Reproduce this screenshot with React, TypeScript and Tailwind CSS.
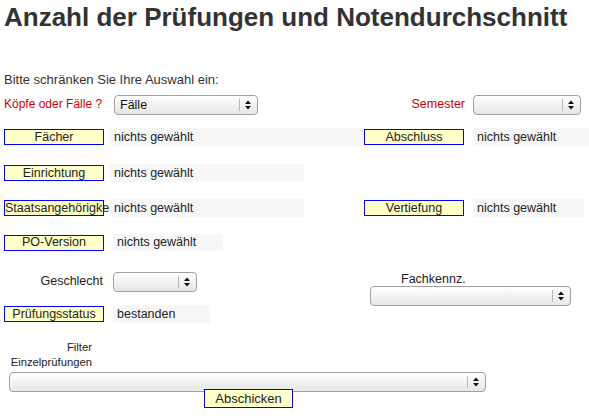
import React from "react";

function Btn({ label, overflow }: { label: string; overflow?: boolean }) {
  return (
    <div
      className={
        "flex h-[16px] w-[100px] shrink-0 items-center whitespace-nowrap border border-[#0000ff] bg-[#ffffc8] text-[12.5px] leading-none text-[#222] " +
        (overflow ? "justify-start" : "justify-center")
      }
    >
      {label}
    </div>
  );
}

function Box({ text, w, h = 18 }: { text: string; w: number; h?: number }) {
  return (
    <div
      className="relative z-10 flex shrink-0 items-center bg-[#f7f7f7] pl-[4px] text-[12.5px] text-[#222]"
      style={{ width: w, height: h }}
    >
      {text}
    </div>
  );
}

function Select({ w, value }: { w: number; value?: string }) {
  return (
    <div
      className="flex h-[20px] shrink-0 items-center rounded-[4px] border border-[#a0a0a0] bg-gradient-to-b from-white to-[#e6e6e6] text-[12.5px] text-[#111]"
      style={{ width: w }}
    >
      <span className="flex-1 pl-[5px]">{value}</span>
      <span className="h-[12px] w-px bg-[#b8b8b8]" />
      <svg width="16" height="12" viewBox="0 0 16 12" className="mr-[1px]">
        <path d="M5 5 L8 1.5 L11 5 Z" fill="#111" />
        <path d="M5 7 L8 10.5 L11 7 Z" fill="#111" />
      </svg>
    </div>
  );
}

export default function App() {
  return (
    <div className="h-[416px] w-[589px] overflow-hidden bg-white font-['Liberation_Sans',Arial,sans-serif] text-[#333]">
      <h1 className="pl-[4px] pt-[2px] text-[26px] font-bold leading-[30px] text-[#333]">
        Anzahl der Prüfungen und Notendurchschnitt
      </h1>

      <p className="mt-[41px] pl-[4px] text-[13px] leading-[14px]">
        Bitte schränken Sie Ihre Auswahl ein:
      </p>

      <div className="mt-[8px] flex h-[21px]">
        <div className="w-[110px] whitespace-nowrap pl-[4px] pt-[2px] text-[12px] leading-[14px] text-[#cc0000]">
          Köpfe oder Fälle ?
        </div>
        <div className="pl-[4px]">
          <Select w={144} value="Fälle" />
        </div>
        <div className="w-[215px] pr-[8px] pt-[2px] text-right text-[12.5px] leading-[14px] text-[#cc0000]">
          Semester
        </div>
        <Select w={108} />
      </div>

      <div className="mt-[12px] flex items-center">
        <div className="w-[110px] pl-[4px]">
          <Btn label="Fächer" />
        </div>
        <Box text="nichts gewählt" w={254} />
        <Btn label="Abschluss" />
        <div className="w-[9px]" />
        <Box text="nichts gewählt" w={116} />
      </div>

      <div className="mt-[18px] flex items-center">
        <div className="w-[110px] pl-[4px]">
          <Btn label="Einrichtung" />
        </div>
        <Box text="nichts gewählt" w={194} />
      </div>

      <div className="mt-[17px] flex items-center">
        <div className="w-[110px] pl-[4px]">
          <Btn label="Staatsangehörigkeit" overflow />
        </div>
        <Box text="nichts gewählt" w={194} />
        <div className="w-[60px]" />
        <Btn label="Vertiefung" />
        <div className="w-[9px]" />
        <Box text="nichts gewählt" w={111} />
      </div>

      <div className="mt-[17px] flex items-center">
        <div className="w-[113px] pl-[4px]">
          <Btn label="PO-Version" />
        </div>
        <Box text="nichts gewählt" w={110} h={17} />
      </div>

      <div className="mt-[21px] flex h-[35px]">
        <div className="w-[113px] pr-[10px] pt-[2px] text-right text-[12.5px] leading-[14px] text-[#222]">
          Geschlecht
        </div>
        <Select w={84} />
        <div className="ml-[173px] flex w-[201px] flex-col">
          <div className="pl-[31px] text-[12.5px] leading-[14px] text-[#222]">Fachkennz.</div>
          <Select w={201} />
        </div>
      </div>

      <div className="mt-[-2px] flex items-center">
        <div className="w-[113px] pl-[4px]">
          <Btn label="Prüfungsstatus" />
        </div>
        <Box text="bestanden" w={97} />
      </div>

      <div className="mt-[17px] w-[92px] text-right text-[11.25px] leading-[15px] text-[#222]">
        Filter
        <br />
        Einzelprüfungen
      </div>
      <div className="mt-[2px] pl-[9px]">
        <Select w={477} />
      </div>
      <div className="mt-[-3px] pl-[204px]">
        <div className="flex h-[19px] w-[89px] items-center justify-center border border-[#0000ff] bg-[#ffffc8] text-[13px] text-[#222]">
          Abschicken
        </div>
      </div>
    </div>
  );
}
